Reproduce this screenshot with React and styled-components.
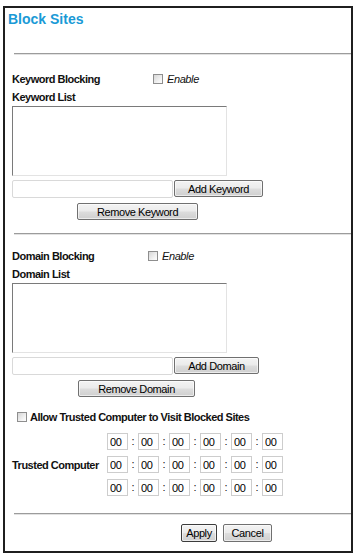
import React from 'react';
import styled, { createGlobalStyle } from 'styled-components';

const Global = createGlobalStyle`
  html, body { margin: 0; padding: 0; background: #fff; }
  body { font-family: "Liberation Sans", Arial, sans-serif; color: #111; }
`;

const Frame = styled.div`
  box-sizing: border-box;
  width: 350px;
  height: 547px;
  margin: 6px 0 0 3px;
  border: 2px solid #1f1f1f;
  display: flex;
  flex-direction: column;
`;

const Title = styled.h1`
  margin: 3px 0 0 3px;
  font-size: 14px;
  line-height: 16px;
  font-weight: bold;
  color: #1a9ad6;
`;

const Divider = styled.div`
  margin: ${(p) => p.$top}px 0 0 9px;
  height: 0;
  border-top: 1px solid #9c9c9c;
  border-bottom: 1px solid #e2e2e2;
`;

const Section = styled.div`
  margin-top: ${(p) => p.$top}px;
  padding-left: 7px;
  display: flex;
  flex-direction: column;
  align-items: flex-start;
`;

const HeaderRow = styled.div`
  display: flex;
  align-items: center;
  height: 18px;
`;

const Label = styled.div`
  font-size: 11px;
  line-height: 18px;
  font-weight: bold;
  letter-spacing: -0.5px;
  white-space: nowrap;
  width: ${(p) => (p.$w ? `${p.$w}px` : 'auto')};
  flex: none;
`;

const Check = styled.span`
  box-sizing: border-box;
  display: inline-block;
  width: 10px;
  height: 10px;
  margin-left: ${(p) => p.$ml || 0}px;
  border: 1px solid #8e8e8e;
  background: linear-gradient(135deg, #d6d6d6 0%, #f4f4f4 70%, #fdfdfd 100%);
  flex: none;
`;

const Italic = styled.span`
  margin-left: 4px;
  font-size: 11px;
  font-style: italic;
  letter-spacing: -0.4px;
  line-height: 18px;
`;

const ListBox = styled.textarea`
  box-sizing: border-box;
  display: block;
  width: 215px;
  height: 70px;
  margin: 0;
  padding: 0;
  resize: none;
  border-style: solid;
  border-width: 1px;
  border-color: #7a7a7a #e3e3e3 #e3e3e3 #7a7a7a;
  background: #fff;
`;

const AddRow = styled.div`
  display: flex;
  align-items: flex-start;
  gap: 1px;
  margin-top: 4px;
`;

const TextField = styled.input`
  box-sizing: border-box;
  width: 161px;
  height: 18px;
  margin: 0;
  padding: 0 2px;
  border: 1px solid #d9d9d9;
  border-radius: 2px;
  background: #fff;
`;

const Btn = styled.button`
  box-sizing: border-box;
  width: ${(p) => p.$w}px;
  height: ${(p) => p.$h || 17}px;
  margin: ${(p) => p.$mt || 0}px 0 0 ${(p) => p.$ml || 0}px;
  padding: 0;
  font-family: "Liberation Sans", Arial, sans-serif;
  font-size: 11px;
  letter-spacing: -0.4px;
  color: #000;
  border: 1px solid ${(p) => (p.$default ? '#3c3c3c' : '#707070')};
  border-radius: 2px;
  background: linear-gradient(#f3f3f3 0%, #ebebeb 48%, #dddddd 52%, #cfcfcf 100%);
  box-shadow: inset 0 0 0 1px rgba(255, 255, 255, 0.6);
`;

const AllowRow = styled.div`
  display: flex;
  align-items: center;
  height: 18px;
  margin-top: 11px;
`;

const AllowLabel = styled(Label)`
  margin-left: 3px;
`;

const TrustedBlock = styled.div`
  display: flex;
  align-items: center;
  margin-top: 7px;
`;

const MacGrid = styled.div`
  display: flex;
  flex-direction: column;
  gap: 6px;
`;

const MacRow = styled.div`
  display: flex;
  align-items: center;
`;

const Octet = styled.input`
  box-sizing: border-box;
  width: 21px;
  height: 17px;
  margin: 0;
  padding: 0 0 0 2px;
  border: 1px solid #cdcdcd;
  font-family: "Liberation Sans", Arial, sans-serif;
  font-size: 11px;
  letter-spacing: -0.3px;
  color: #000;
  background: #fff;
`;

const Colon = styled.span`
  width: 10px;
  text-align: center;
  font-size: 11px;
  line-height: 17px;
`;

const ButtonBar = styled.div`
  display: flex;
  gap: 6px;
  margin-top: 9px;
  padding-left: 176px;
`;

function MacInputs() {
  const cells = [];
  for (let i = 0; i < 6; i++) {
    if (i > 0) cells.push(<Colon key={`c${i}`}>:</Colon>);
    cells.push(<Octet key={`o${i}`} defaultValue="00" maxLength={2} />);
  }
  return <MacRow>{cells}</MacRow>;
}

function BlockHeader({ title, listTitle, labelW }) {
  return (
    <>
      <HeaderRow>
        <Label $w={labelW}>{title}</Label>
        <Check />
        <Italic>Enable</Italic>
      </HeaderRow>
      <Label>{listTitle}</Label>
      <ListBox />
    </>
  );
}

export default function App() {
  return (
    <>
      <Global />
      <Frame>
        <Title>Block Sites</Title>
        <Divider $top={26} />
        <Section $top={15}>
          <BlockHeader title="Keyword Blocking" listTitle="Keyword List" labelW={141} />
          <AddRow>
            <TextField />
            <Btn $w={89}>Add Keyword</Btn>
          </AddRow>
          <Btn $w={121} $ml={65} $mt={5}>Remove Keyword</Btn>
        </Section>
        <Divider $top={13} />
        <Section $top={12}>
          <BlockHeader title="Domain Blocking" listTitle="Domain List" labelW={136} />
          <AddRow>
            <TextField />
            <Btn $w={85}>Add Domain</Btn>
          </AddRow>
          <Btn $w={117} $ml={66} $mt={5}>Remove Domain</Btn>
          <AllowRow>
            <Check $ml={5} />
            <AllowLabel>Allow Trusted Computer to Visit Blocked Sites</AllowLabel>
          </AllowRow>
          <TrustedBlock>
            <Label $w={95}>Trusted Computer</Label>
            <MacGrid>
              <MacInputs />
              <MacInputs />
              <MacInputs />
            </MacGrid>
          </TrustedBlock>
        </Section>
        <Divider $top={17} />
        <ButtonBar>
          <Btn $w={36} $h={18} $default>Apply</Btn>
          <Btn $w={49} $h={18}>Cancel</Btn>
        </ButtonBar>
      </Frame>
    </>
  );
}
